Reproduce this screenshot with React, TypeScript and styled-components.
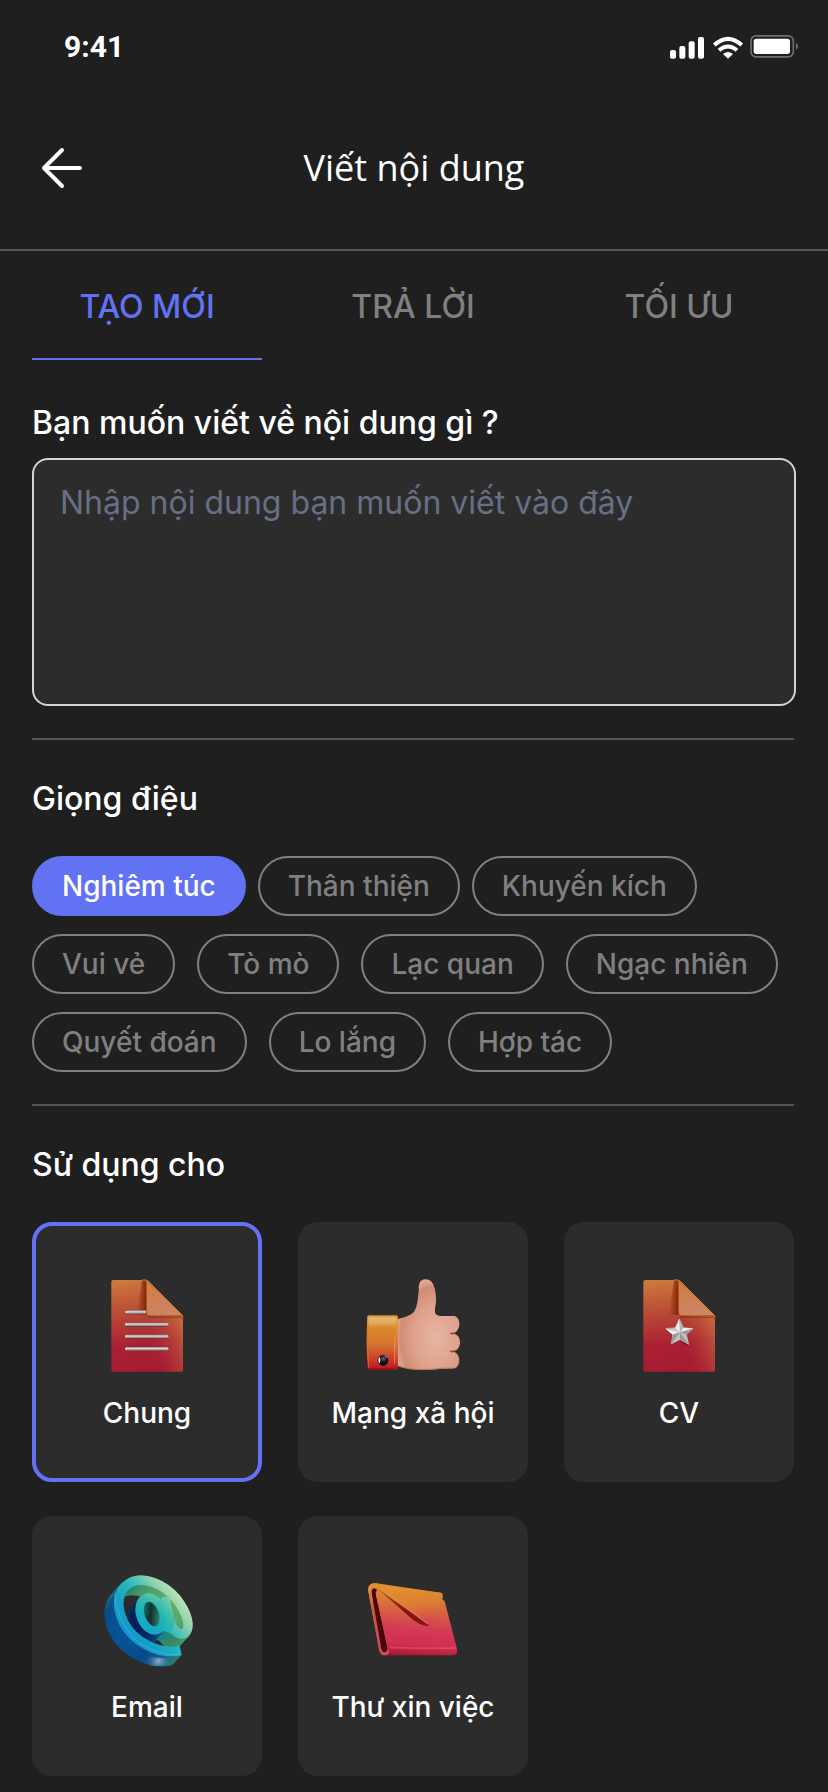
import React, { useState } from 'react';
import styled, { createGlobalStyle } from 'styled-components';

const color = {
  bg: '#1f1f1f',
  panel: '#2c2c2c',
  line: '#545454',
  muted: '#808080',
  primary: '#6172f3',
  border: '#d0d5dd',
  hint: '#667085',
  text: '#ffffff',
};

const GlobalStyle = createGlobalStyle`
  *, *::before, *::after { box-sizing: border-box; }
  body { margin: 0; background: ${color.bg}; color: ${color.text}; font-family: Inter, sans-serif; }
  button, textarea { font: inherit; }
  button { cursor: pointer; }
`;

const Screen = styled.div`
  min-height: 100vh;
  padding-bottom: 16px;
`;

const StatusBar = styled.div`
  display: flex;
  align-items: center;
  justify-content: space-between;
  height: 87px;
  padding: 6px 30px 0 64px;
`;

const Clock = styled.time`
  font-family: Roboto, sans-serif;
  font-size: 30px;
  font-weight: 700;
  line-height: 36px;
`;

const Header = styled.header`
  display: grid;
  grid-template-columns: 48px 1fr 48px;
  align-items: center;
  height: 164px;
  padding: 0 38px;
  border-bottom: 2px solid ${color.line};
`;

const BackButton = styled.button`
  display: flex;
  padding: 0;
  border: 0;
  background: none;
  color: inherit;
`;

const Title = styled.h1`
  margin: 0;
  font-family: 'Open Sans', sans-serif;
  font-size: 36px;
  font-weight: 400;
  line-height: 48px;
  text-align: center;
`;

const Content = styled.main`
  padding: 0 34px 0 32px;
`;

const Tabs = styled.nav`
  display: grid;
  grid-template-columns: repeat(3, 1fr);
  gap: 36px;
`;

const Tab = styled.button<{ $active: boolean }>`
  padding: 36px 0 31px;
  border: 0;
  border-bottom: 2px solid ${(p) => (p.$active ? color.primary : 'transparent')};
  background: none;
  color: ${(p) => (p.$active ? color.primary : color.muted)};
  font-size: 32px;
  font-weight: 500;
  line-height: 40px;
`;

const PromptLabel = styled.label`
  display: block;
  margin: 43px 0 15px;
  font-size: 32px;
  font-weight: 500;
  line-height: 40px;
`;

const PromptBox = styled.textarea`
  display: block;
  width: calc(100% + 2px);
  height: 248px;
  padding: 23px 26px;
  border: 2px solid ${color.border};
  border-radius: 16px;
  outline: none;
  resize: none;
  background: ${color.panel};
  color: ${color.text};
  font-size: 32px;
  line-height: 40px;

  &::placeholder {
    color: ${color.hint};
    opacity: 1;
  }
`;

const Section = styled.section`
  margin-top: 32px;
  border-top: 2px solid ${color.line};
`;

const SectionTitle = styled.h2`
  margin: 39px 0 37px;
  font-size: 32px;
  font-weight: 500;
  line-height: 40px;
`;

const ToneList = styled.div`
  display: flex;
  flex-direction: column;
  gap: 18px;
`;

const ToneRow = styled.div<{ $gap: number }>`
  display: flex;
  flex-wrap: wrap;
  gap: 18px ${(p) => p.$gap}px;
`;

const Tone = styled.button<{ $active: boolean }>`
  height: 60px;
  padding: 0 28px;
  border: 2px solid ${(p) => (p.$active ? color.primary : color.muted)};
  border-radius: 30px;
  background: ${(p) => (p.$active ? color.primary : 'transparent')};
  color: ${(p) => (p.$active ? color.text : color.muted)};
  font-size: 28px;
  font-weight: 500;
  line-height: 36px;
`;

const CardGrid = styled.div`
  display: grid;
  grid-template-columns: repeat(3, 1fr);
  gap: 34px 36px;
`;

const Card = styled.button<{ $active: boolean }>`
  display: flex;
  flex-direction: column;
  align-items: center;
  gap: 20px;
  height: 260px;
  padding: 52px 0 0;
  border: 4px solid ${(p) => (p.$active ? color.primary : color.panel)};
  border-radius: 20px;
  background: ${color.panel};
  color: ${color.text};
  font-size: 28px;
  font-weight: 500;
  line-height: 38px;
`;

const Picture = styled.svg`
  width: 96px;
  height: 96px;
`;

function StatusIcons() {
  return (
    <svg width="128" height="24" viewBox="90 42 384 72" aria-hidden="true">
      <g fill="#fff">
        <rect x="90" y="87" width="18" height="26" rx="6" />
        <rect x="118" y="75" width="18" height="38" rx="6" />
        <rect x="146" y="61" width="18" height="52" rx="6" />
        <rect x="174" y="48" width="18" height="65" rx="6" />
        <path d="M264 113 L249 99 Q264 87 279 99 Z" strokeLinejoin="round" />
        <rect x="341" y="53" width="109" height="46" rx="8" />
      </g>
      <g fill="none" stroke="#fff" strokeWidth="12">
        <path d="M223 72 Q264 35 305 72" />
        <path d="M237 88 Q264 65 291 88" />
      </g>
      <rect x="333" y="44.500" width="127" height="63" rx="15" fill="none" stroke="#6f6f6f" strokeWidth="5" />
      <path d="M468 65 Q474 69 474 76 T468 88 Z" fill="#6f6f6f" />
    </svg>
  );
}

function BackArrow() {
  return (
    <svg width="48" height="48" viewBox="0 0 48 48" fill="none" stroke="currentColor" strokeWidth="4" strokeLinecap="round" strokeLinejoin="round" aria-hidden="true">
      <path d="M42 24H6M24 6L6 24l18 18" />
    </svg>
  );
}

function Paper({ id }: { id: string }) {
  return (
    <>
      <defs>
        <linearGradient id={`${id}-body`} x1="0.3" y1="0" x2="0.4" y2="1">
          <stop offset="0" stopColor="#cc783f" />
          <stop offset="0.35" stopColor="#b94a35" />
          <stop offset="0.7" stopColor="#aa2033" />
          <stop offset="1" stopColor="#a51b30" />
        </linearGradient>
        <linearGradient id={`${id}-side`} x1="1" y1="0.35" x2="0.4" y2="0.7">
          <stop offset="0" stopColor="#d07a42" stopOpacity="0.85" />
          <stop offset="1" stopColor="#b04038" stopOpacity="0" />
        </linearGradient>
        <linearGradient id={`${id}-shade`}>
          <stop offset="0" stopColor="#8b2a08" stopOpacity="0" />
          <stop offset="1" stopColor="#7a2205" />
        </linearGradient>
        <linearGradient id={`${id}-fold`} x1="0" y1="0" x2="0.5" y2="1">
          <stop offset="0" stopColor="#d07c3c" />
          <stop offset="0.6" stopColor="#cf8157" />
          <stop offset="1" stopColor="#cf8468" />
        </linearGradient>
      </defs>
      <path d="M64 66q0-6 6-6h98l111 111v158q0 6-6 6H70q-6 0-6-6z" fill={`url(#${id}-body)`} />
      <path d="M168 60l111 111v158q0 6-6 6H120z" fill={`url(#${id}-side)`} />
      <path d="M140 164L156 62h14v102z" fill={`url(#${id}-shade)`} />
      <path d="M168 160l8 14h100l-4-12z" fill="#8d3516" opacity="0.7" />
      <path d="M154 60q8-6 18 0l108 108q2 16-6 10l-6-6-90-4q-9-1-9-10V66z" fill="#ad5722" />
      <path d="M170 62L275 166h-95q-9 0-9-9z" fill={`url(#${id}-fold)`} />
      <path d="M172 61L279 168" stroke="#d98238" strokeWidth="3" />
    </>
  );
}

function DocumentPicture() {
  return (
    <Picture viewBox="27 54 288 288" aria-hidden="true">
      <Paper id="doc" />
      <defs>
        <linearGradient id="doc-metal" x1="0" y1="0" x2="0" y2="1">
          <stop offset="0" stopColor="#8a8483" />
          <stop offset="0.35" stopColor="#dedada" />
          <stop offset="0.65" stopColor="#a8a1a0" />
          <stop offset="1" stopColor="#5c3033" />
        </linearGradient>
      </defs>
      <g fill="url(#doc-metal)">
        <path d="M110 151h58v12h-58q-4-6 0-12z" />
        <rect x="106" y="188" width="129" height="12" rx="4" />
        <rect x="106" y="224" width="129" height="12" rx="4" />
        <rect x="106" y="261" width="129" height="12" rx="4" />
      </g>
      <g fill="#e8e6e6">
        <circle cx="109" cy="156" r="3" />
        <circle cx="109" cy="193" r="3" />
        <circle cx="109" cy="229" r="3" />
        <circle cx="109" cy="266" r="3" />
      </g>
    </Picture>
  );
}

function ResumePicture() {
  return (
    <Picture viewBox="33 54 288 288" aria-hidden="true">
      <g transform="translate(6 0)">
        <Paper id="cv" />
      </g>
      <path d="M176 181l12 24 29 4-20 18 7 30-26-14-26 13 4-30-21-19 28-3z" fill="#6c101d" />
      <path d="M178 177l12 26 29 3-20 18 7 29-26-14-26 13 4-28-21-18 29-3z" fill="#c4c2c2" stroke="#c4c2c2" strokeWidth="2" strokeLinejoin="round" />
      <g fill="#efeeee">
        <path d="M178 177l2 40-14-14z" />
        <path d="M137 206l43 11-22 7z" />
        <path d="M219 206l-39 11 10-14z" />
      </g>
      <g fill="#9c9999">
        <path d="M206 253l-26-36v22z" />
        <path d="M154 252l26-35-22 7z" />
        <path d="M219 206l-39 11 19 7z" />
      </g>
      <path d="M178 177l2 40 10-14z" fill="#b4b2b2" />
    </Picture>
  );
}

function ThumbPicture() {
  return (
    <Picture viewBox="45 54 288 288" aria-hidden="true">
      <defs>
        <radialGradient id="thumb-skin" cx="0.62" cy="0.64" r="0.62">
          <stop offset="0" stopColor="#e5b5a2" />
          <stop offset="0.55" stopColor="#dfa38e" />
          <stop offset="0.9" stopColor="#d08d76" />
          <stop offset="1" stopColor="#dda08c" />
        </radialGradient>
        <linearGradient id="thumb-cuff" x1="0" y1="0" x2="0" y2="1">
          <stop offset="0" stopColor="#d98b1c" />
          <stop offset="0.05" stopColor="#e6b573" />
          <stop offset="0.14" stopColor="#e0a862" />
          <stop offset="0.22" stopColor="#da8b28" />
          <stop offset="0.55" stopColor="#d4712f" />
          <stop offset="0.8" stopColor="#cc3d2a" />
          <stop offset="0.95" stopColor="#bd1d22" />
          <stop offset="1" stopColor="#8d0d16" />
        </linearGradient>
        <linearGradient id="thumb-edge" x1="0" y1="0" x2="0" y2="1">
          <stop offset="0" stopColor="#f0a21e" />
          <stop offset="0.6" stopColor="#e4702a" />
          <stop offset="1" stopColor="#b31523" />
        </linearGradient>
        <radialGradient id="thumb-stud" cx="0.55" cy="0.35" r="0.6">
          <stop offset="0" stopColor="#6a6e70" />
          <stop offset="0.5" stopColor="#151718" />
          <stop offset="1" stopColor="#050505" />
        </radialGradient>
      </defs>
      <path d="M140 178C165 172 184 166 193 154 205 132 204 106 208 74 210 52 241 54 249 72 262 100 258 132 255 146 253 160 259 168 272 168L312 168C335 172 333 213 309 221 336 222 338 268 310 275 334 280 332 320 314 325L272 326C235 331 180 332 140 316z" fill="url(#thumb-skin)" />
      <path d="M207 83C210 60 237 56 246 70" fill="none" stroke="#e9b5a5" strokeWidth="3" />
      <path d="M145 318C185 333 235 329 272 325L312 324" fill="none" stroke="#c37b56" strokeWidth="3" />
      <path d="M298 219q14-2 22-2l-9 6q-8 2-13-4zM298 272q14-1 22-1l-9 6q-8 2-13-5z" fill="#a3402c" />
      <path d="M55 166h83q5 0 5 5v154q0 5-5 5H58q-4 0-5-7-6-70-1-152 0-5 3-5z" fill="url(#thumb-cuff)" />
      <path d="M140 168v160h1v-160z" stroke="url(#thumb-edge)" strokeWidth="3" />
      <path d="M134 230v82" stroke="#f0a084" strokeWidth="3" opacity="0.7" />
      <path d="M54 175q-5 70 2 148" fill="none" stroke="#df7622" strokeWidth="3" opacity="0.8" />
      <circle cx="99" cy="301" r="16" fill="url(#thumb-stud)" />
      <path d="M89 290q-8 10 0 21 5-10 0-21zM103 287q7 1 10 6-6-1-10-6z" fill="#fff" />
    </Picture>
  );
}

function AtRing({ stroke }: { stroke: string }) {
  return (
    <path
      d="M272 271C205 287 130 243 101 188 76 136 82 92 118 70 160 46 222 72 259 116 292 158 303 200 286 218 268 230 246 212 241 184"
      fill="none"
      stroke={stroke}
      strokeWidth="29"
      strokeLinejoin="round"
    />
  );
}

function AtBowl({ stroke }: { stroke: string }) {
  return (
    <g fill="none" stroke={stroke}>
      <ellipse cx="185" cy="162" rx="34" ry="51" strokeWidth="25" transform="rotate(-20 185 162)" />
      <path d="M225 110L241 186 230 216" strokeWidth="27" />
    </g>
  );
}

function EmailPicture() {
  const depth = Array.from({ length: 16 }, (_, i) => 16 - i);
  return (
    <Picture viewBox="27 36 288 288" aria-hidden="true">
      <defs>
        <linearGradient id="at-face" gradientUnits="userSpaceOnUse" x1="290" y1="90" x2="95" y2="250">
          <stop offset="0" stopColor="#d2eccb" />
          <stop offset="0.22" stopColor="#9bd6ac" />
          <stop offset="0.48" stopColor="#2bb8bb" />
          <stop offset="0.72" stopColor="#16a0c8" />
          <stop offset="1" stopColor="#128dcc" />
        </linearGradient>
        <linearGradient id="at-letter" gradientUnits="userSpaceOnUse" x1="250" y1="110" x2="140" y2="210">
          <stop offset="0" stopColor="#8fd6a4" />
          <stop offset="0.35" stopColor="#35bcae" />
          <stop offset="0.7" stopColor="#14afbf" />
          <stop offset="1" stopColor="#16a5cb" />
        </linearGradient>
        <linearGradient id="at-ring-side" gradientUnits="userSpaceOnUse" x1="255" y1="110" x2="70" y2="250">
          <stop offset="0" stopColor="#69b268" />
          <stop offset="0.3" stopColor="#338a68" />
          <stop offset="0.5" stopColor="#1b7180" />
          <stop offset="0.7" stopColor="#07498a" />
          <stop offset="1" stopColor="#0a67ad" />
        </linearGradient>
        <linearGradient id="at-letter-side" gradientUnits="userSpaceOnUse" x1="245" y1="180" x2="135" y2="190">
          <stop offset="0" stopColor="#2b8f7c" />
          <stop offset="0.4" stopColor="#10708a" />
          <stop offset="0.6" stopColor="#053a74" />
          <stop offset="1" stopColor="#021a55" />
        </linearGradient>
        <linearGradient id="at-hole" gradientUnits="userSpaceOnUse" x1="165" y1="150" x2="210" y2="170">
          <stop offset="0" stopColor="#0f6f68" />
          <stop offset="0.4" stopColor="#12302d" />
          <stop offset="1" stopColor="#35806a" />
        </linearGradient>
        <radialGradient id="at-glow" gradientUnits="userSpaceOnUse" cx="205" cy="303" r="36">
          <stop offset="0" stopColor="#a9bde0" stopOpacity="0.85" />
          <stop offset="1" stopColor="#3c6ea8" stopOpacity="0" />
        </radialGradient>
      </defs>
      {depth.map((d) => (
        <g key={`ring-${d}`} transform={`translate(${-1.75 * d} ${1.9 * d})`}>
          <AtRing stroke="url(#at-ring-side)" />
        </g>
      ))}
      <path d="M168 288Q225 300 272 287L248 308Q215 322 172 316z" fill="url(#at-glow)" />
      <path d="M108 136Q106 170 124 196L120 128z" fill="#262a30" />
      {depth.map((d) => (
        <g key={`letter-${d}`} transform={`translate(${-1.3 * d} ${1.7 * d})`}>
          <AtBowl stroke="url(#at-letter-side)" />
        </g>
      ))}
      <ellipse cx="185" cy="162" rx="23" ry="40" transform="rotate(-20 185 162)" fill="url(#at-hole)" />
      <path d="M168 166Q180 172 188 194 172 188 168 166z" fill="#292b2c" />
      <AtRing stroke="url(#at-face)" />
      <AtBowl stroke="url(#at-letter)" />
      <path d="M74 102Q78 170 128 232 190 288 270 285" fill="none" stroke="#5fc4e8" strokeWidth="2" opacity="0.7" />
    </Picture>
  );
}

function LetterPicture() {
  return (
    <Picture viewBox="45 36 288 288" aria-hidden="true">
      <defs>
        <linearGradient id="letter-front" gradientUnits="userSpaceOnUse" x1="200" y1="75" x2="185" y2="286">
          <stop offset="0" stopColor="#dd8b2b" />
          <stop offset="0.22" stopColor="#da7a35" />
          <stop offset="0.42" stopColor="#d65a45" />
          <stop offset="0.64" stopColor="#d33855" />
          <stop offset="0.85" stopColor="#d22f50" />
          <stop offset="0.93" stopColor="#c0263e" />
          <stop offset="1" stopColor="#a81832" />
        </linearGradient>
        <linearGradient id="letter-flap" gradientUnits="userSpaceOnUse" x1="190" y1="80" x2="200" y2="200">
          <stop offset="0" stopColor="#df922c" />
          <stop offset="0.45" stopColor="#dc7c33" />
          <stop offset="1" stopColor="#d53e54" />
        </linearGradient>
        <linearGradient id="letter-rim" x1="0" y1="0" x2="0.2" y2="1">
          <stop offset="0" stopColor="#e79a3c" />
          <stop offset="0.4" stopColor="#c55a3c" />
          <stop offset="1" stopColor="#cf4a63" />
        </linearGradient>
        <linearGradient id="letter-shadow" gradientUnits="userSpaceOnUse" x1="100" y1="90" x2="210" y2="190">
          <stop offset="0" stopColor="#a54218" />
          <stop offset="0.6" stopColor="#7d1512" />
          <stop offset="1" stopColor="#8d1020" />
        </linearGradient>
      </defs>
      <path d="M55 94C52 76 64 67 80 70L272 98Q278 99 278 105L277 118 284 124 321 266Q324 286 306 286L105 286Q93 287 88 274z" fill="url(#letter-front)" />
      <path d="M55 94C52 76 64 67 80 70L92 88 118 270Q118 287 103 286 93 287 88 274z" fill="url(#letter-rim)" />
      <path d="M65 98C63 84 76 80 82 93L78 106 112 262Q114 276 104 277 97 277 94 268z" fill="#4b0707" />
      <path d="M77 99Q78 88 88 92L180 180 120 284 113 262z" fill="url(#letter-front)" />
      <path d="M88 91L240 197 226 197Q205 192 185 176L104 104z" fill="url(#letter-shadow)" />
      <path d="M68 72L272 98Q278 99 278 105L276 120C268 150 258 184 240 197L96 89Q84 80 68 84z" fill="url(#letter-flap)" />
      <path d="M84 82Q92 84 98 90L234 192" fill="none" stroke="#e39a50" strokeWidth="2" />
      <path d="M120 262Q220 266 318 264" fill="none" stroke="#e3607b" strokeWidth="5" opacity="0.55" />
    </Picture>
  );
}

const tabs = ['TẠO MỚI', 'TRẢ LỜI', 'TỐI ƯU'];

const toneRows = [
  { gap: 12, tones: ['Nghiêm túc', 'Thân thiện', 'Khuyến kích'] },
  { gap: 22, tones: ['Vui vẻ', 'Tò mò', 'Lạc quan', 'Ngạc nhiên'] },
  { gap: 22, tones: ['Quyết đoán', 'Lo lắng', 'Hợp tác'] },
];

const purposes = [
  { name: 'Chung', Art: DocumentPicture },
  { name: 'Mạng xã hội', Art: ThumbPicture },
  { name: 'CV', Art: ResumePicture },
  { name: 'Email', Art: EmailPicture },
  { name: 'Thư xin việc', Art: LetterPicture },
];

export default function App() {
  const [tab, setTab] = useState(tabs[0]);
  const [tone, setTone] = useState('Nghiêm túc');
  const [purpose, setPurpose] = useState('Chung');

  return (
    <Screen>
      <GlobalStyle />
      <StatusBar>
        <Clock>9:41</Clock>
        <StatusIcons />
      </StatusBar>
      <Header>
        <BackButton type="button" aria-label="Quay lại">
          <BackArrow />
        </BackButton>
        <Title>Viết nội dung</Title>
      </Header>
      <Content>
        <Tabs>
          {tabs.map((name) => (
            <Tab key={name} type="button" $active={name === tab} onClick={() => setTab(name)}>
              {name}
            </Tab>
          ))}
        </Tabs>
        <PromptLabel htmlFor="prompt">Bạn muốn viết về nội dung gì ?</PromptLabel>
        <PromptBox id="prompt" placeholder="Nhập nội dung bạn muốn viết vào đây" />
        <Section>
          <SectionTitle>Giọng điệu</SectionTitle>
          <ToneList>
            {toneRows.map((row) => (
              <ToneRow key={row.tones[0]} $gap={row.gap}>
                {row.tones.map((name) => (
                  <Tone key={name} type="button" aria-pressed={name === tone} $active={name === tone} onClick={() => setTone(name)}>
                    {name}
                  </Tone>
                ))}
              </ToneRow>
            ))}
          </ToneList>
        </Section>
        <Section>
          <SectionTitle>Sử dụng cho</SectionTitle>
          <CardGrid>
            {purposes.map(({ name, Art }) => (
              <Card key={name} type="button" aria-pressed={name === purpose} $active={name === purpose} onClick={() => setPurpose(name)}>
                <Art />
                {name}
              </Card>
            ))}
          </CardGrid>
        </Section>
      </Content>
    </Screen>
  );
}
